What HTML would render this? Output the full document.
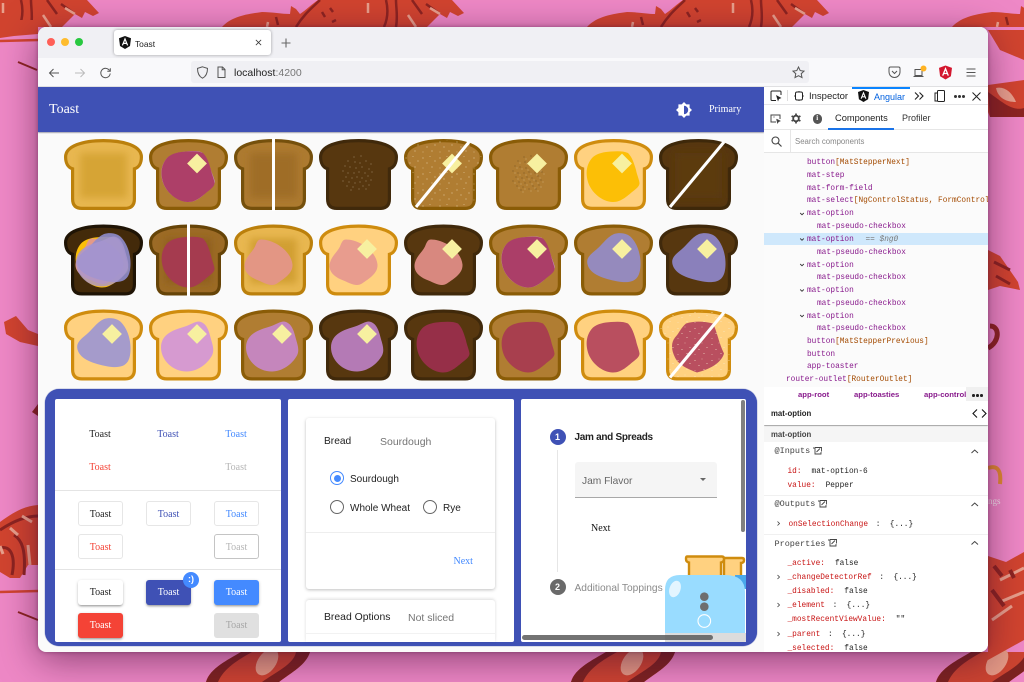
<!DOCTYPE html>
<html><head><meta charset="utf-8"><title>Toast</title>
<style>
html,body{margin:0;padding:0;width:1024px;height:682px;overflow:hidden;background:#ee88c6}
*{box-sizing:border-box}
.a{position:absolute}
.t{position:absolute;line-height:14px;white-space:nowrap;margin-top:2px}
.d0{margin-top:0}.d1{margin-top:1px}
#bg{position:absolute;left:0;top:0}
#win{position:absolute;left:38px;top:27px;width:950px;height:625px;border-radius:8px;overflow:hidden;background:#fafafa;box-shadow:0 8px 38px rgba(60,10,50,.55),0 0 4px rgba(60,10,50,.4)}
#page{position:absolute;left:0;top:0;width:1024px;height:682px;overflow:hidden;font-family:"Liberation Sans",sans-serif}
.s{font-family:"Liberation Serif",serif;font-size:10px}
.c{text-align:center;width:46px}
.m{font-family:"Liberation Mono",monospace;font-size:7.8px;line-height:12px;color:#222;margin-top:1px}
.p{color:#881a8c}.o{color:#a34a00}.r{color:#c81414}
.v{color:#222;margin-left:10px}.w{color:#222;margin-left:3px}
.b{position:absolute;width:45px;height:25px;border-radius:3px;font:10px/25px "Liberation Serif",serif;text-align:center}
.st{border:1px solid #e6e6e6;background:#fff}
.ra{box-shadow:0 2px 2px -1px rgba(0,0,0,.3),0 1px 3px rgba(0,0,0,.2)}
.card{position:absolute;background:#fff;border-radius:2px}
.mc{position:absolute;background:#fff;box-shadow:0 1px 3px rgba(0,0,0,.25);border-radius:3px}
.rad{position:absolute;width:14px;height:14px;border-radius:50%;border:1.4px solid #666}
.ln{position:absolute;background:#e4e4e4;height:1px}
.sn{position:absolute;left:0;width:224px;height:1px;background:#f0f0f0}
</style></head><body>
<svg id="bg" width="1024" height="682" viewBox="0 0 1024 682">
<defs>
<g id="tl">
<path d="M222 27C232 16 248 14 262 12C272 12 282 14 290 14L291 6L296 9L300 14C306 10 312 4 318 0L452 0L464 13L458 16L450 12L447 18L440 14L427 27Z" fill="#d1442f"/>
<path d="M296 27C304 14 312 8 320 0M384 27C388 18 388 8 386 0M396 27C398 16 396 8 396 0" fill="none" stroke="#8c2420" stroke-width="2.500"/>
<path d="M276 17l2 8M322 12l3 5M330 8l3 4M332 22l4-2M412 0l10 14M426 4l14 10" fill="none" stroke="#8c2420" stroke-width="2.500"/>
<path d="M268 22l-1 5M368 3l0 10M408 15l8 12M430 8l10 6" fill="none" stroke="#e8a08c" stroke-width="2.500"/>
</g>
<g id="cl">
<path d="M241 652L310 652C306 665 292 672 279 682L206 682C210 668 228 660 241 652Z" fill="#cc4430"/>
<path d="M241 652C228 660 210 668 206 682L218 682C224 668 238 660 252 652ZM310 652C306 665 292 672 279 682L262 682C276 672 294 664 296 652Z" fill="#7d2320"/>
<ellipse cx="267" cy="662" rx="9" ry="15" transform="rotate(35 267 662)" fill="#e49a85"/>
</g>
</defs>
<use href="#tl" x="-365"/><use href="#tl"/><use href="#tl" x="365"/><use href="#tl" x="730"/>
<use href="#cl"/><use href="#cl" x="365"/><use href="#cl" x="730"/>
<g fill="#d1442f">
<path d="M0 522C14 512 24 506 38 505L38 565L28 565L20 578L10 578L0 572Z"/>
<path d="M0 20L38 20L38 34L14 36L0 38Z"/>
<path d="M32 412L38 404L38 416Z" fill="#8c2420"/>
<path d="M988 85L1024 80L1024 117L990 117L988 112Z"/>
<path d="M988 250L1000 256L1018 282L1020 290L1000 286L988 290Z"/>
<path d="M988 556L1006 562L1024 552L1024 640L988 660Z"/>
<path d="M988 30L1024 30L1024 60L1000 50Z"/>
<path d="M4 322L16 316L28 330L38 334L38 346L20 342L6 334Z"/>
</g>
<path d="M0 41L38 40" stroke="#d1442f" stroke-width="2.500"/>
<path d="M18 62L37 70" stroke="#8c2420" stroke-width="2"/>
<path d="M0 592L38 591" stroke="#d1442f" stroke-width="2.500"/>
<path d="M18 612L38 620" stroke="#8c2420" stroke-width="2"/>
<path d="M0 530C12 522 26 516 38 516M0 548C10 545 16 555 12 575M14 535C22 540 26 550 24 575" fill="none" stroke="#8c2420" stroke-width="3"/>
<path d="M22 516l10 6M10 528l8 7M0 546l3 8M28 545l2 20" fill="none" stroke="#e8a08c" stroke-width="3"/>
<path d="M988 92C1000 100 1012 112 1024 108L1024 117L990 117Z" fill="#8c2420"/>
<path d="M996 88C1004 86 1012 92 1016 102C1006 102 998 98 996 88Z" fill="#e8a08c"/>
<path d="M990 326C1000 326 1000 342 988 348" fill="none" stroke="#8c2420" stroke-width="5"/>
<path d="M994 262l16 8M996 276l14 8" stroke="#8c2420" stroke-width="3"/>
<path d="M1000 580l24 -12M1000 602l24 -10M992 620l20 -14" stroke="#e8a08c" stroke-width="3"/>
<path d="M994 566l8 10M1010 570l4 8M992 590l12 16" stroke="#8c2420" stroke-width="4"/>
<path d="M988 468C994 466 1002 466 1000 484" fill="none" stroke="#e08a30" stroke-width="4"/>
</svg>
<div class="t d0" style="left:988px;top:494px;font-size:9px;color:#f6e6f0">ngs</div>

<div id="win"></div>
<div id="page" style="clip-path:inset(27px 36px 30px 38px round 8px)">

<!-- tab bar -->
<div class="a" style="left:38px;top:27px;width:950px;height:31px;background:#f0f0f4"></div>
<div class="a" style="left:38px;top:58px;width:950px;height:29px;background:#f9f9fb"></div>
<div class="a" style="left:38px;top:86px;width:950px;height:1px;background:#e0e0e2"></div>
<div class="a" style="left:47px;top:38px;width:8px;height:8px;border-radius:50%;background:#ff5f57"></div>
<div class="a" style="left:61px;top:38px;width:8px;height:8px;border-radius:50%;background:#febc2e"></div>
<div class="a" style="left:75px;top:38px;width:8px;height:8px;border-radius:50%;background:#28c840"></div>
<div class="a" style="left:114px;top:30px;width:157px;height:25px;background:#fff;border-radius:3px;box-shadow:0 0 3px rgba(0,0,0,.35)"></div>
<svg class="a" style="left:119px;top:36px" width="12" height="13" viewBox="0 0 12 13"><path d="M6 0L12 2.200L11 10L6 13L1 10L0 2.200Z" fill="#111"/><path d="M3.400 9.400L6 3L8.600 9.400M4.400 7.400H7.600" fill="none" stroke="#fff" stroke-width="1.200"/></svg>
<div class="t d1" style="left:135px;top:36px;font-size:8.400px;color:#222">Toast</div>
<svg class="a" style="left:255px;top:38.500px" width="7" height="7" viewBox="0 0 8 8"><path d="M1 1L7 7M7 1L1 7" stroke="#333" stroke-width="1"/></svg>
<svg class="a" style="left:281px;top:38px" width="10" height="10" viewBox="0 0 10 10"><path d="M5 .5V9.500M.5 5H9.500" stroke="#666" stroke-width="1.100"/></svg>

<!-- nav -->
<svg class="a" style="left:48px;top:67px" width="66" height="12" viewBox="0 0 66 12"><path d="M11 6H1.500M5.500 2L1.500 6L5.500 10" fill="none" stroke="#555" stroke-width="1"/><path d="M27 6H36.500M32.500 2L36.500 6L32.500 10" fill="none" stroke="#bbb" stroke-width="1"/><path d="M61.500 3.500A4.700 4.700 0 1 0 62.200 6.500M62.300 1.200V4.200H59.300" fill="none" stroke="#555" stroke-width="1"/></svg>
<div class="a" style="left:191px;top:61px;width:618px;height:22px;background:#f0f0f4;border-radius:3px"></div>
<svg class="a" style="left:197px;top:66px" width="32" height="13" viewBox="0 0 32 13"><path d="M5.500 .8L10.500 2.400C10.500 7 9 10.500 5.500 12.200C2 10.500 .5 7 .5 2.400Z" fill="none" stroke="#555" stroke-width="1"/><path d="M21 1H25.500L28 3.500V11.500H21ZM25.200 1V3.800H28" fill="none" stroke="#555" stroke-width="1"/></svg>
<div class="t d1" style="left:234px;top:65px;font-size:10.500px;color:#222">localhost<span style="color:#777">:4200</span></div>
<svg class="a" style="left:792px;top:66px" width="13" height="13" viewBox="0 0 13 13"><path d="M6.500 1L8.200 4.600L12 5.100L9.200 7.700L10 11.600L6.500 9.700L3 11.600L3.800 7.700L1 5.100L4.800 4.600Z" fill="none" stroke="#555" stroke-width="1"/></svg>
<svg class="a" style="left:888px;top:66px" width="13" height="13" viewBox="0 0 13 13"><path d="M1 2.500Q1 1 2.500 1H10.500Q12 1 12 2.500V6A5.500 5.500 0 0 1 1 6Z" fill="none" stroke="#555" stroke-width="1"/><path d="M4 5L6.500 7.500L9 5" fill="none" stroke="#555" stroke-width="1"/></svg>
<svg class="a" style="left:913px;top:65px" width="14" height="14" viewBox="0 0 14 14"><path d="M2 4.500H9V10.500H2ZM.5 11.500H10.500" fill="none" stroke="#555" stroke-width="1"/><circle cx="10.500" cy="3.500" r="3" fill="#ffb322"/></svg>
<svg class="a" style="left:939px;top:65px" width="13" height="15" viewBox="0 0 12 13"><path d="M6 0L12 2.200L11 10L6 13L1 10L0 2.200Z" fill="#d3172f"/><path d="M3.400 9.400L6 3L8.600 9.400M4.400 7.400H7.600" fill="none" stroke="#fff" stroke-width="1.200"/></svg>
<svg class="a" style="left:966px;top:68px" width="10" height="9" viewBox="0 0 10 9"><path d="M.5 1H9.500M.5 4.500H9.500M.5 8H9.500" stroke="#555" stroke-width="1.100"/></svg>

<!-- app header -->
<div class="a" style="left:38px;top:87px;width:726px;height:45px;background:#3f51b5;box-shadow:0 1px 1px rgba(0,0,40,.35)"></div>
<div class="t s" style="left:49px;top:100.500px;font-size:14px;color:#fff">Toast</div>
<svg class="a" style="left:676px;top:102px" width="16" height="16" viewBox="0 0 16 16"><path d="M8 0L10.300 2.400H13.600V5.700L16 8L13.600 10.300V13.600H10.300L8 16L5.700 13.600H2.400V10.300L0 8L2.400 5.700V2.400H5.700Z" fill="#fff"/><path d="M8 3.800A4.200 4.200 0 0 1 8 12.200Z" fill="#3f51b5"/></svg>
<div class="t s" style="left:709px;top:101px;color:#fff">Primary</div>

<!-- toasts -->
<svg class="a" style="left:0;top:0" width="764" height="390" viewBox="0 0 764 390">
<defs>
<path id="b" d="M39.500 1.600C60 1.600 77.400 7 77.400 18C77.400 24 75 28.500 70.400 29.800L70.400 60Q70.400 69.400 61 69.400L18 69.400Q8.600 69.400 8.600 60L8.600 29.800C4 28.500 1.600 24 1.600 18C1.600 7 19 1.600 39.500 1.600Z"/>
<path id="ja" d="M37 12.500C44 12 50 12 54 14C58 18 60 24 62 31C63 36 65 40 65.500 44C65.500 47 63 49 60 51.500C54 56 48 63 39 63C28 63 17 53 14 43C11 33 13 24 19 18C24 14 30 13 37 12.500Z"/>
<path id="jb" d="M27 15C40 15 57 26 58.500 40C59 49 50 54 43 59C37 63 30 58 22 55C13 51 9 45 11 38C13 31 18 28 21 22C23 17 24 15 27 15Z"/>
<path id="jl" d="M40 9.500C47 7.500 55 9 59 15C66 24 68 38 65.500 48C63 57 56 58 48 57.500C36 56 20 52 15 43.500C11 36 14 32 20 27C28 21 32 13 40 9.500Z"/>
<path id="jr" d="M50 12C56 13 59 18 61 26C63 34 66 40 63 46C58 55 48 62 38 62C23 62 12 50 12 38C12 24 26 20 36 17C42 15 46 12 50 12Z"/>
<path id="js" d="M27 14C36 11 46 12 54 14C58 22 60 34 65 44C62 54 50 60 38 63C30 60 20 56 16 48C12 40 12 33 16 28C20 24 22 18 27 14Z"/>
<rect id="bu" x="41" y="17.500" width="14" height="14" transform="rotate(45 48 24.500)" fill="#f7f0a0"/>
<filter id="bl" x="-40%" y="-40%" width="180%" height="180%"><feGaussianBlur stdDeviation="4"/></filter>
<rect id="ce" x="16" y="14" width="47" height="45" filter="url(#bl)"/>
<pattern id="sp" width="17" height="16" patternUnits="userSpaceOnUse">
<circle cx="2" cy="3" r=".45" fill="#f5ead0"/><circle cx="9" cy="1.500" r=".4" fill="#f5ead0"/><circle cx="14" cy="6" r=".45" fill="#f5ead0"/><circle cx="6" cy="8" r=".45" fill="#f5ead0"/><circle cx="11" cy="12" r=".45" fill="#f5ead0"/><circle cx="2" cy="13" r=".4" fill="#f5ead0"/>
</pattern>
<path id="spd" d="M35 18h0M42 17h0M29 22h0M36 23h0M41 24h0M47 22h0M52 25h0M26 27h0M31 28h0M37 29h0M43 28h0M50 30h0M24 32h0M29 34h0M35 34h0M40 33h0M46 34h0M53 33h0M27 38h0M33 39h0M38 38h0M43 39h0M49 37h0M24 42h0M30 43h0M36 44h0M41 43h0M47 42h0M52 41h0M28 47h0M34 48h0M44 47h0M50 46h0M32 51h0M40 50h0M47 50h0" fill="none" stroke-linecap="round" stroke-width=".8"/>
</defs>
<g stroke-width="3.200">
<!-- row 1 -->
<g transform="translate(64,139)"><use href="#b" fill="#e8b750" stroke="#bb800c"/><use href="#ce" fill="#d6a436"/></g>
<g transform="translate(149,139)"><use href="#b" fill="#b07d32" stroke="#8a5c07"/><use href="#ja" fill="#c58dc8" transform="rotate(-3 39 38)"/><use href="#ja" fill="#ad3f68"/><use href="#bu"/></g>
<g transform="translate(234,139)"><use href="#b" fill="#ad7a30" stroke="#75500c"/><use href="#ce" fill="#9f6d25"/><rect x="38" y="-1" width="3" height="73" fill="#fff"/></g>
<g transform="translate(319,139)"><use href="#b" fill="#57370f" stroke="#40290b"/><use href="#spd" stroke="#f4ecd8"/></g>
<g transform="translate(404,139)"><use href="#b" fill="#b07d32" stroke="#8a5c07"/><use href="#b" fill="url(#sp)" stroke="none"/><use href="#bu"/><path d="M65 3L12 68" stroke="#fff" stroke-width="3"/></g>
<g transform="translate(489,139)"><use href="#b" fill="#b07d32" stroke="#8a5c07"/><use href="#spd" stroke="#2e1f0a"/><use href="#spd" stroke="#f0e3c4" transform="translate(2,2)"/><use href="#bu"/></g>
<g transform="translate(574,139)"><use href="#b" fill="#ffd180" stroke="#cf8c0e"/><use href="#ja" fill="#fcbf06"/><use href="#bu"/></g>
<g transform="translate(659,139)"><use href="#b" fill="#57370f" stroke="#3e280a"/><use href="#ce" fill="#5c3a08"/><path d="M65 3L11 68" stroke="#fff" stroke-width="3"/></g>
<!-- row 2 -->
<g transform="translate(64,224.500)"><use href="#b" fill="#432a0a" stroke="#1f1405"/><use href="#ja" fill="#fcbf06" transform="translate(-1,0)"/><use href="#jb" fill="#e39a88" transform="translate(1,-1)"/><use href="#jl" fill="#8f8ccc" opacity=".9"/><use href="#jr" fill="#a796d0" opacity=".8"/></g>
<g transform="translate(149,224.500)"><use href="#b" fill="#9c6b26" stroke="#664408"/><use href="#ce" fill="#8f5f1e"/><use href="#ja" fill="#a53b4f"/><rect x="38" y="-1" width="3" height="73" fill="#fff"/></g>
<g transform="translate(234,224.500)"><use href="#b" fill="#e8b750" stroke="#bb800c"/><use href="#ce" fill="#d19f30"/><use href="#jb" fill="#e39684"/></g>
<g transform="translate(319,224.500)"><use href="#b" fill="#ffd180" stroke="#cf8c0e"/><use href="#jb" fill="#e89c8e"/><use href="#bu"/></g>
<g transform="translate(404,224.500)"><use href="#b" fill="#57370f" stroke="#40290b"/><use href="#jb" fill="#d8887f"/><use href="#bu"/></g>
<g transform="translate(489,224.500)"><use href="#b" fill="#b07d32" stroke="#8a5c07"/><use href="#ja" fill="#c58dc8" transform="rotate(-3 39 38)"/><use href="#ja" fill="#ab3e68"/><use href="#bu"/></g>
<g transform="translate(574,224.500)"><use href="#b" fill="#b07d32" stroke="#8a5c07"/><use href="#jl" fill="#958abd"/><use href="#bu"/></g>
<g transform="translate(659,224.500)"><use href="#b" fill="#57370f" stroke="#40290b"/><use href="#jl" fill="#8a80bb"/><use href="#bu"/></g>
<!-- row 3 -->
<g transform="translate(64,309.500)"><use href="#b" fill="#ffd180" stroke="#cf8c0e"/><use href="#jl" fill="#a59bcb"/><use href="#bu"/></g>
<g transform="translate(149,309.500)"><use href="#b" fill="#ffd180" stroke="#cf8c0e"/><use href="#jr" fill="#d69ad0"/><use href="#bu"/></g>
<g transform="translate(234,309.500)"><use href="#b" fill="#b07d32" stroke="#8a5c07"/><use href="#jr" fill="#c586bc"/><use href="#bu"/></g>
<g transform="translate(319,309.500)"><use href="#b" fill="#57370f" stroke="#40290b"/><use href="#jr" fill="#b47ab5"/><use href="#bu"/></g>
<g transform="translate(404,309.500)"><use href="#b" fill="#57370f" stroke="#40290b"/><use href="#ja" fill="#962f48"/></g>
<g transform="translate(489,309.500)"><use href="#b" fill="#b07d32" stroke="#8a5c07"/><use href="#ja" fill="#a83f4e"/></g>
<g transform="translate(574,309.500)"><use href="#b" fill="#ffd180" stroke="#cf8c0e"/><use href="#ja" fill="#b94f5f"/></g>
<g transform="translate(659,309.500)"><use href="#b" fill="#ffd180" stroke="#cf8c0e"/><use href="#js" fill="#b94f5f"/><use href="#b" fill="url(#sp)" stroke="none"/><path d="M65 3L11 68" stroke="#fff" stroke-width="3"/></g>
</g>
</svg>

<!-- bottom panel -->
<div class="a" style="left:45px;top:389px;width:712px;height:257px;background:#3f51b5;border-radius:14px;box-shadow:0 0 1px #2a3a9a"></div>
<div class="card" style="left:55px;top:399px;width:226px;height:243px"></div>
<div class="card" style="left:288px;top:399px;width:226px;height:243px"></div>
<div class="card" style="left:521px;top:399px;width:225px;height:243px;overflow:hidden"></div>

<!-- card 1 -->
<div class="t s c" style="left:77px;top:426px;color:#222">Toast</div>
<div class="t s c" style="left:145px;top:426px;color:#3f51b5">Toast</div>
<div class="t s c" style="left:213px;top:426px;color:#448aff">Toast</div>
<div class="t s c" style="left:77px;top:459px;color:#f44336">Toast</div>
<div class="t s c" style="left:213px;top:459px;color:#b5b5b5">Toast</div>
<div class="ln" style="left:55px;top:490px;width:226px"></div>
<div class="b st" style="left:78px;top:501px;color:#222">Toast</div>
<div class="b st" style="left:146px;top:501px;color:#3f51b5">Toast</div>
<div class="b st" style="left:214px;top:501px;color:#448aff">Toast</div>
<div class="b st" style="left:78px;top:533.500px;color:#f44336">Toast</div>
<div class="b" style="left:214px;top:533.500px;color:#b5b5b5;background:#fff;border:1px solid #c4c4c4">Toast</div>
<div class="ln" style="left:55px;top:569px;width:226px"></div>
<div class="b ra" style="left:78px;top:580px;color:#222;background:#fff">Toast</div>
<div class="b ra" style="left:146px;top:580px;color:#fff;background:#3f51b5">Toast</div>
<div class="b ra" style="left:214px;top:580px;color:#fff;background:#448aff">Toast</div>
<div class="b ra" style="left:78px;top:613px;color:#fff;background:#f44336">Toast</div>
<div class="b" style="left:214px;top:613px;color:#a6a6a6;background:#e0e0e0">Toast</div>
<div class="a" style="left:183px;top:572px;width:16px;height:16px;border-radius:50%;background:#448aff;color:#fff;font:bold 9px/15px 'Liberation Sans',sans-serif;text-align:center">:)</div>

<!-- card 2 -->
<div class="mc" style="left:306px;top:418px;width:189px;height:171px"></div>
<div class="ln" style="left:306px;top:532px;width:189px;background:#eee"></div>
<div class="t" style="left:324px;top:433px;font-size:10.200px;color:#222">Bread</div>
<div class="t" style="left:380px;top:433px;font-size:10.500px;color:#757575">Sourdough</div>
<div class="rad" style="left:330px;top:471px;border-color:#448aff"></div>
<div class="a" style="left:333.500px;top:474.500px;width:7px;height:7px;border-radius:50%;background:#448aff"></div>
<div class="t" style="left:350px;top:471px;font-size:10px;color:#222">Sourdough</div>
<div class="rad" style="left:330px;top:500px"></div>
<div class="t" style="left:350px;top:500px;font-size:10px;color:#222">Whole Wheat</div>
<div class="rad" style="left:423px;top:500px"></div>
<div class="t" style="left:443px;top:500px;font-size:10px;color:#222">Rye</div>
<div class="t s" style="left:453.500px;top:553px;color:#448aff">Next</div>
<div class="a" style="left:306px;top:600px;width:189px;height:42px;background:#fff;box-shadow:0 -1px 3px rgba(0,0,0,.14);border-radius:3px 3px 0 0"></div>
<div class="ln" style="left:306px;top:633px;width:189px;background:#f2f2f2"></div>
<div class="t" style="left:324px;top:609px;font-size:10.400px;color:#222">Bread Options</div>
<div class="t" style="left:408px;top:609px;font-size:10.500px;color:#757575">Not sliced</div>

<!-- card 3 -->
<div class="a" style="left:549.500px;top:429px;width:16px;height:16px;border-radius:50%;background:#3f51b5;color:#fff;font:bold 9px/16px 'Liberation Sans',sans-serif;text-align:center">1</div>
<div class="t" style="left:574.500px;top:429px;font-size:10px;font-weight:bold;color:#222;letter-spacing:-.3px">Jam and Spreads</div>
<div class="a" style="left:556.500px;top:450px;width:1.500px;height:122px;background:#e6e6e6"></div>
<div class="a" style="left:575px;top:462px;width:142px;height:36px;background:#f5f5f5;border-bottom:1px solid #a8a8a8;border-radius:3px 3px 0 0"></div>
<div class="t" style="left:582px;top:473px;font-size:10.200px;color:#666">Jam Flavor</div>
<div class="a" style="left:699.500px;top:478px;width:0;height:0;border-left:3.500px solid transparent;border-right:3.500px solid transparent;border-top:3.500px solid #666"></div>
<div class="t s" style="left:591px;top:520px;color:#111">Next</div>
<div class="a" style="left:549.500px;top:579px;width:16px;height:16px;border-radius:50%;background:#6a6a6a;color:#fff;font:bold 9px/16px 'Liberation Sans',sans-serif;text-align:center">2</div>
<div class="t" style="left:574.500px;top:580px;font-size:10.200px;color:#8a8a8a">Additional Toppings</div>

<svg class="a" style="left:521px;top:399px" width="225" height="243" viewBox="521 399 225 243">
<g stroke="#cf8c0e" stroke-width="2.400" fill="#ffd180">
<path d="M726 558H742Q744 558 744 560Q744 563 741 563L741 580H724V558Z"/>
<path d="M687 556.500H722Q724 556.500 724 559Q724 562 721 562.500V590H689V562.500Q686 562 686 559Q686 556.500 687 556.500Z"/>
</g>
<rect x="735" y="575" width="12" height="14" fill="#4aa8ea"/>
<path d="M665 633V590Q665 575 680 575H725Q745 575 745 592V633Z" fill="#99dcff"/>
<rect x="665" y="633" width="81" height="9" fill="#dcdcdc"/>
<ellipse cx="675" cy="589" rx="5.500" ry="8.500" transform="rotate(20 675 589)" fill="#e3f5ff"/>
<circle cx="704.300" cy="596.700" r="4.300" fill="#6e6e6e"/>
<circle cx="704.300" cy="606.700" r="4.300" fill="#6e6e6e"/>
<circle cx="704.300" cy="621" r="6.300" fill="none" stroke="#fff" stroke-width="1.100"/>
</svg>
<div class="a" style="left:740.500px;top:400px;width:4.500px;height:132px;border-radius:3px;background:#808080"></div>
<div class="a" style="left:522px;top:635px;width:191px;height:4.500px;border-radius:3px;background:rgba(90,90,90,.85)"></div>

<!-- devtools -->
<div class="a" style="left:764px;top:87px;width:224px;height:565px;background:#fff;overflow:hidden" id="dt">
<div class="a" style="left:0;top:17px;width:224px;height:1px;background:#e4e4e6"></div>
<div class="a" style="left:88px;top:0;width:58px;height:1.500px;background:#0a84ff"></div>
<svg class="a" style="left:6px;top:3px" width="12" height="12" viewBox="0 0 12 12"><path d="M6 10.500H2Q1 10.500 1 9.500V2Q1 1 2 1H10Q11 1 11 2V5" fill="none" stroke="#222" stroke-width="1"/><path d="M6 5L11.500 8L9 9L8 11.500Z" fill="#222"/></svg>
<div class="a" style="left:23px;top:3px;width:1px;height:11px;background:#ddd"></div>
<svg class="a" style="left:30px;top:4px" width="10" height="10" viewBox="0 0 10 10"><rect x="1.500" y="1" width="7" height="8" rx="1.500" fill="none" stroke="#222" stroke-width="1"/><path d="M0 5H1.500M8.500 5H10M5 0V1M5 9V10" stroke="#222" stroke-width=".8"/></svg>
<div class="t d0" style="left:45px;top:3px;font-size:9.500px;color:#222">Inspector</div>
<svg class="a" style="left:94px;top:3px" width="11" height="12" viewBox="0 0 12 13"><path d="M6 0L12 2.200L11 10L6 13L1 10L0 2.200Z" fill="#111"/><path d="M3.400 9.400L6 3L8.600 9.400M4.400 7.400H7.600" fill="none" stroke="#fff" stroke-width="1.200"/></svg>
<div class="t d0" style="left:110px;top:3px;font-size:9px;color:#0060df">Angular</div>
<svg class="a" style="left:150px;top:5px" width="11" height="8" viewBox="0 0 11 8"><path d="M1 .5L4.500 4L1 7.500M5.500 .5L9 4L5.500 7.500" fill="none" stroke="#222" stroke-width="1.100"/></svg>
<svg class="a" style="left:170px;top:3px" width="11" height="12" viewBox="0 0 11 12"><rect x="3.500" y=".5" width="7" height="11" rx="1" fill="none" stroke="#222"/><path d="M3.500 3H1V11H3.500" fill="none" stroke="#222"/></svg>
<div class="a" style="left:190px;top:7.500px;width:3px;height:3px;border-radius:50%;background:#333;box-shadow:4px 0 #333,8px 0 #333"></div>
<svg class="a" style="left:208px;top:5px" width="9" height="9" viewBox="0 0 9 9"><path d="M.5 .5L8.500 8.500M8.500 .5L.5 8.500" stroke="#222" stroke-width="1"/></svg>
<!-- second row -->
<div class="a" style="left:0;top:42px;width:224px;height:1px;background:#e6e6e6"></div>
<svg class="a" style="left:6px;top:26px" width="11" height="11" viewBox="0 0 11 11"><path d="M10 6V2H1V9H6" fill="none" stroke="#444"/><path d="M3 4H5M6.500 6L10.500 8L8.500 8.800L7.500 10.500Z" fill="#444" stroke="#444" stroke-width=".5"/></svg>
<svg class="a" style="left:27px;top:26px" width="10" height="11" viewBox="0 0 10 11"><circle cx="5" cy="5.500" r="2.800" fill="none" stroke="#444" stroke-width="1.800"/><path d="M5 .5V2M5 9V10.500M.6 3L2 3.800M8 7.200L9.400 8M.6 8L2 7.200M8 3.800L9.400 3" stroke="#444" stroke-width="1.700"/></svg>
<div class="a" style="left:48.500px;top:27px;width:9.500px;height:9.500px;border-radius:50%;background:#555;color:#fff;font:bold 7px/9.500px 'Liberation Serif',serif;text-align:center">i</div>
<div class="t d0" style="left:71px;top:24px;font-size:9.300px;color:#222">Components</div>
<div class="a" style="left:64px;top:41px;width:66px;height:1.500px;background:#1a73e8"></div>
<div class="t d0" style="left:138px;top:24px;font-size:9px;color:#333">Profiler</div>
<!-- search -->
<svg class="a" style="left:7px;top:49px" width="11" height="11" viewBox="0 0 11 11"><circle cx="4.500" cy="4.500" r="3.500" fill="none" stroke="#444" stroke-width="1.100"/><path d="M7 7L10.500 10.500" stroke="#444" stroke-width="1.200"/></svg>
<div class="a" style="left:26px;top:43px;width:1px;height:22px;background:#e6e6e6"></div>
<div class="t d1" style="left:31px;top:47px;font-size:7.800px;color:#888">Search components</div>
<div class="a" style="left:0;top:65px;width:224px;height:1px;background:#e6e6e6"></div>
<!-- tree -->
<div class="a" style="left:0;top:66px;width:224px;height:234px;background:#fbfbfb"></div>
<div class="a" style="left:0;top:145.500px;width:224px;height:12.800px;background:#cfe8fc"></div>
<div class="t m p" style="left:43px;top:69px">button<span class="o">[MatStepperNext]</span></div>
<div class="t m p" style="left:43px;top:82px">mat-step</div>
<div class="t m p" style="left:43px;top:94.500px">mat-form-field</div>
<div class="t m p" style="left:43px;top:107px">mat-select<span class="o">[NgControlStatus, FormControl</span></div>
<div class="t m p" style="left:43px;top:120px">mat-option</div>
<div class="t m p" style="left:53px;top:133px">mat-pseudo-checkbox</div>
<div class="t m p" style="left:43px;top:146px">mat-option <span style="color:#777;margin-left:7px">== <i>$ng0</i></span></div>
<div class="t m p" style="left:53px;top:158.500px">mat-pseudo-checkbox</div>
<div class="t m p" style="left:43px;top:171.500px">mat-option</div>
<div class="t m p" style="left:53px;top:184px">mat-pseudo-checkbox</div>
<div class="t m p" style="left:43px;top:197px">mat-option</div>
<div class="t m p" style="left:53px;top:209.500px">mat-pseudo-checkbox</div>
<div class="t m p" style="left:43px;top:222.500px">mat-option</div>
<div class="t m p" style="left:53px;top:235px">mat-pseudo-checkbox</div>
<div class="t m p" style="left:43px;top:248px">button<span class="o">[MatStepperPrevious]</span></div>
<div class="t m p" style="left:43px;top:260.500px">button</div>
<div class="t m p" style="left:43px;top:273px">app-toaster</div>
<div class="t m p" style="left:22px;top:286px">router-outlet<span class="o">[RouterOutlet]</span></div>
<svg class="a" style="left:0;top:66px" width="43" height="180" viewBox="0 0 43 180"><path d="M36.200 60L38 61.800L39.800 60M36.200 85.500L38 87.300L39.800 85.500M36.200 111L38 112.800L39.800 111M36.200 136.500L38 138.300L39.800 136.500M36.200 162L38 163.800L39.800 162" fill="none" stroke="#333" stroke-width=".9"/></svg>
<!-- breadcrumb -->
<div class="a" style="left:0;top:300px;width:224px;height:14px;background:#fff"></div>
<div class="t p d1" style="left:34px;top:300px;font-size:7.700px;font-weight:bold">app-root</div>
<div class="t p d1" style="left:90px;top:300px;font-size:7.700px;font-weight:bold">app-toasties</div>
<div class="a" style="left:160px;top:300px;width:42px;height:14px;overflow:hidden"><div class="t p d1" style="left:0;top:0;font-size:7.700px;font-weight:bold">app-controls</div></div>
<div class="a" style="left:202px;top:300px;width:22px;height:14px;background:#f0f0f0"></div>
<div class="a" style="left:208px;top:307px;width:2.500px;height:2.500px;border-radius:50%;background:#222;box-shadow:4px 0 #222,8px 0 #222"></div>
<!-- header -->
<div class="a" style="left:0;top:315px;width:224px;height:23px;background:#fff;box-shadow:0 1px 1px rgba(0,0,0,.4)"></div>
<div class="t d1" style="left:7px;top:319px;font-size:7.800px;font-weight:bold;color:#222">mat-option</div>
<svg class="a" style="left:208px;top:322px" width="15" height="9" viewBox="0 0 15 9"><path d="M5 .5L1 4.500L5 8.500M10 .5L14 4.500L10 8.500" fill="none" stroke="#111" stroke-width="1.100"/></svg>
<div class="a" style="left:0;top:340px;width:224px;height:15px;background:#f5f5f5"></div>
<div class="t d1" style="left:7px;top:340px;font-size:7.800px;font-weight:bold;color:#444">mat-option</div>
<div class="t m" style="left:10.500px;top:357px;font-size:8.500px;color:#444">@Inputs</div>
<div class="t m r" style="left:23.500px;top:378px">id:<span class="v">mat-option-6</span></div>
<div class="t m r" style="left:23.500px;top:392px">value:<span class="v">Pepper</span></div>
<div class="sn" style="top:408px"></div>
<div class="t m" style="left:10.500px;top:410px;font-size:8.500px;color:#444">@Outputs</div>
<div class="t m r" style="left:24.500px;top:431px">onSelectionChange<span class="w"> :&nbsp;&nbsp;{...}</span></div>
<div class="sn" style="top:447px"></div>
<div class="t m" style="left:10.500px;top:450px;font-size:8.500px;color:#444">Properties</div>
<div class="t m r" style="left:23.500px;top:470px">_active:<span class="v">false</span></div>
<div class="t m r" style="left:23.500px;top:484px">_changeDetectorRef<span class="w"> :&nbsp;&nbsp;{...}</span></div>
<div class="t m r" style="left:23.500px;top:498px">_disabled:<span class="v">false</span></div>
<div class="t m r" style="left:23.500px;top:512px">_element<span class="w"> :&nbsp;&nbsp;{...}</span></div>
<div class="t m r" style="left:23.500px;top:526px">_mostRecentViewValue:<span class="v">""</span></div>
<div class="t m r" style="left:23.500px;top:541px">_parent<span class="w"> :&nbsp;&nbsp;{...}</span></div>
<div class="t m r" style="left:23.500px;top:555px">_selected:<span class="v">false</span></div>
<svg class="a" style="left:0;top:355px" width="224" height="210" viewBox="0 0 224 210">
<g fill="none" stroke="#444" stroke-width=".9">
<path d="M50 5.500H52V11.500H58V9.500M52 5H58.500V9M53.500 9.500L57 6" transform="translate(-1,.5)"/>
<path d="M55 58.500H57V64.500H63V62.500M57 58H63.500V62M58.500 62.500L62 59" transform="translate(-1,.5)"/>
<path d="M65 97.500H67V103.500H73V101.500M67 97H73.500V101M68.500 101.500L72 98" transform="translate(-1,.5)"/>
<path d="M207.500 11L210.700 8L214 11M207.500 64L210.700 61L214 64M207.500 102.500L210.700 99.500L214 102.500" stroke-width="1"/>
<path d="M13.500 79.500L15.500 81.500L13.500 83.500M13.500 133L15.500 135L13.500 137M13.500 161L15.500 163L13.500 165M13.500 190L15.500 192L13.500 194" stroke-width=".8"/>
</g>
</svg>
</div>
</div>
</body></html>
